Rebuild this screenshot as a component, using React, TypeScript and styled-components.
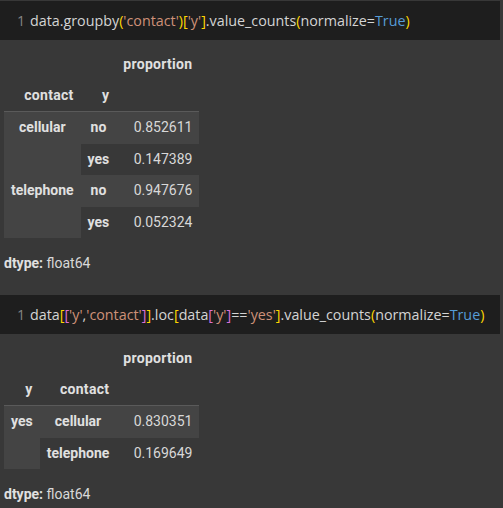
import React from 'react'
import styled, { createGlobalStyle } from 'styled-components'

const Global = createGlobalStyle`
  html, body {
    margin: 0;
    padding: 0;
    background: #383838;
  }
  body {
    padding-top: 1px;
    font-family: Roboto, "Noto Sans", sans-serif;
    color: #d5d5d5;
  }
`

const CodeCell = styled.div`
  height: 39px;
  margin-right: 3px;
  background: #1e1e1e;
  display: flex;
  align-items: center;
  padding-left: 17px;
`

const LineNo = styled.span`
  width: 13px;
  color: #858585;
  font-family: "Open Sans", sans-serif;
  font-size: 14.3px;
`

const Code = styled.code`
  font-family: "Open Sans", sans-serif;
  font-size: 14.3px;
  white-space: pre;
  color: #d4d4d4;
`

type TokKind = 'plain' | 'str' | 'b1' | 'b2' | 'kw'

const tokColors: Record<TokKind, string> = {
  plain: '#d4d4d4',
  str: '#ce9178',
  b1: '#ffd700',
  b2: '#da70d6',
  kw: '#569cd6',
}

const Tok = styled.span<{ $kind: TokKind }>`
  color: ${(p) => tokColors[p.$kind]};
`

const Output = styled.div<{ $bottom: number }>`
  padding: 9px 4px ${(p) => p.$bottom}px;
`

const Table = styled.table`
  border-collapse: collapse;
  border-spacing: 0;
  font-size: 14px;
  line-height: 17px;
`

const Row = styled.tr<{ $shaded?: boolean }>`
  background: ${(p) => (p.$shaded ? '#444444' : 'transparent')};
`

const HeadRow = styled.tr<{ $last?: boolean }>`
  border-bottom: ${(p) => (p.$last ? '1px solid #5a5a5a' : 'none')};
`

const HeadCell = styled.th`
  padding: 7px;
  text-align: right;
  font-weight: 700;
  letter-spacing: 0.3px;
  color: #e0e0e0;
`

const IndexCell = styled.th`
  padding: 7px;
  text-align: center;
  vertical-align: top;
  font-weight: 700;
  color: #e0e0e0;
  height: 17.5px;
`

const ValueCell = styled.td`
  padding: 7px;
  text-align: right;
  color: #d8d8d8;
  height: 17.5px;
`

const Dtype = styled.div`
  margin-top: 16px;
  font-size: 14px;
  line-height: 18px;
  color: #d8d8d8;
  b {
    font-weight: 700;
    color: #e0e0e0;
  }
`

const Line1 = () => (
  <Code>
    <Tok $kind="plain">data.groupby</Tok>
    <Tok $kind="b1">(</Tok>
    <Tok $kind="str">'contact'</Tok>
    <Tok $kind="b1">)[</Tok>
    <Tok $kind="str">'y'</Tok>
    <Tok $kind="b1">]</Tok>
    <Tok $kind="plain">.value_counts</Tok>
    <Tok $kind="b1">(</Tok>
    <Tok $kind="plain">normalize=</Tok>
    <Tok $kind="kw">True</Tok>
    <Tok $kind="b1">)</Tok>
  </Code>
)

const Line2 = () => (
  <Code>
    <Tok $kind="plain">data</Tok>
    <Tok $kind="b1">[</Tok>
    <Tok $kind="b2">[</Tok>
    <Tok $kind="str">'y'</Tok>
    <Tok $kind="plain">,</Tok>
    <Tok $kind="str">'contact'</Tok>
    <Tok $kind="b2">]</Tok>
    <Tok $kind="b1">]</Tok>
    <Tok $kind="plain">.loc</Tok>
    <Tok $kind="b1">[</Tok>
    <Tok $kind="plain">data</Tok>
    <Tok $kind="b2">[</Tok>
    <Tok $kind="str">'y'</Tok>
    <Tok $kind="b2">]</Tok>
    <Tok $kind="plain">==</Tok>
    <Tok $kind="str">'yes'</Tok>
    <Tok $kind="b1">]</Tok>
    <Tok $kind="plain">.value_counts</Tok>
    <Tok $kind="b1">(</Tok>
    <Tok $kind="plain">normalize=</Tok>
    <Tok $kind="kw">True</Tok>
    <Tok $kind="b1">)</Tok>
  </Code>
)

export default function App() {
  return (
    <>
      <Global />
      <CodeCell>
        <LineNo>1</LineNo>
        <Line1 />
      </CodeCell>
      <Output $bottom={23}>
        <Table>
          <thead>
            <tr>
              <HeadCell />
              <HeadCell />
              <HeadCell>proportion</HeadCell>
            </tr>
            <HeadRow $last>
              <HeadCell>contact</HeadCell>
              <HeadCell>y</HeadCell>
              <HeadCell />
            </HeadRow>
          </thead>
          <tbody>
            <Row $shaded>
              <IndexCell rowSpan={2}>cellular</IndexCell>
              <IndexCell>no</IndexCell>
              <ValueCell>0.852611</ValueCell>
            </Row>
            <Row>
              <IndexCell>yes</IndexCell>
              <ValueCell>0.147389</ValueCell>
            </Row>
            <Row $shaded>
              <IndexCell rowSpan={2}>telephone</IndexCell>
              <IndexCell>no</IndexCell>
              <ValueCell>0.947676</ValueCell>
            </Row>
            <Row>
              <IndexCell>yes</IndexCell>
              <ValueCell>0.052324</ValueCell>
            </Row>
          </tbody>
        </Table>
        <Dtype>
          <b>dtype:</b> float64
        </Dtype>
      </Output>
      <CodeCell>
        <LineNo>1</LineNo>
        <Line2 />
      </CodeCell>
      <Output $bottom={6}>
        <Table>
          <thead>
            <tr>
              <HeadCell />
              <HeadCell />
              <HeadCell>proportion</HeadCell>
            </tr>
            <HeadRow $last>
              <HeadCell>y</HeadCell>
              <HeadCell>contact</HeadCell>
              <HeadCell />
            </HeadRow>
          </thead>
          <tbody>
            <Row $shaded>
              <IndexCell rowSpan={2}>yes</IndexCell>
              <IndexCell>cellular</IndexCell>
              <ValueCell>0.830351</ValueCell>
            </Row>
            <Row>
              <IndexCell>telephone</IndexCell>
              <ValueCell>0.169649</ValueCell>
            </Row>
          </tbody>
        </Table>
        <Dtype>
          <b>dtype:</b> float64
        </Dtype>
      </Output>
    </>
  )
}
